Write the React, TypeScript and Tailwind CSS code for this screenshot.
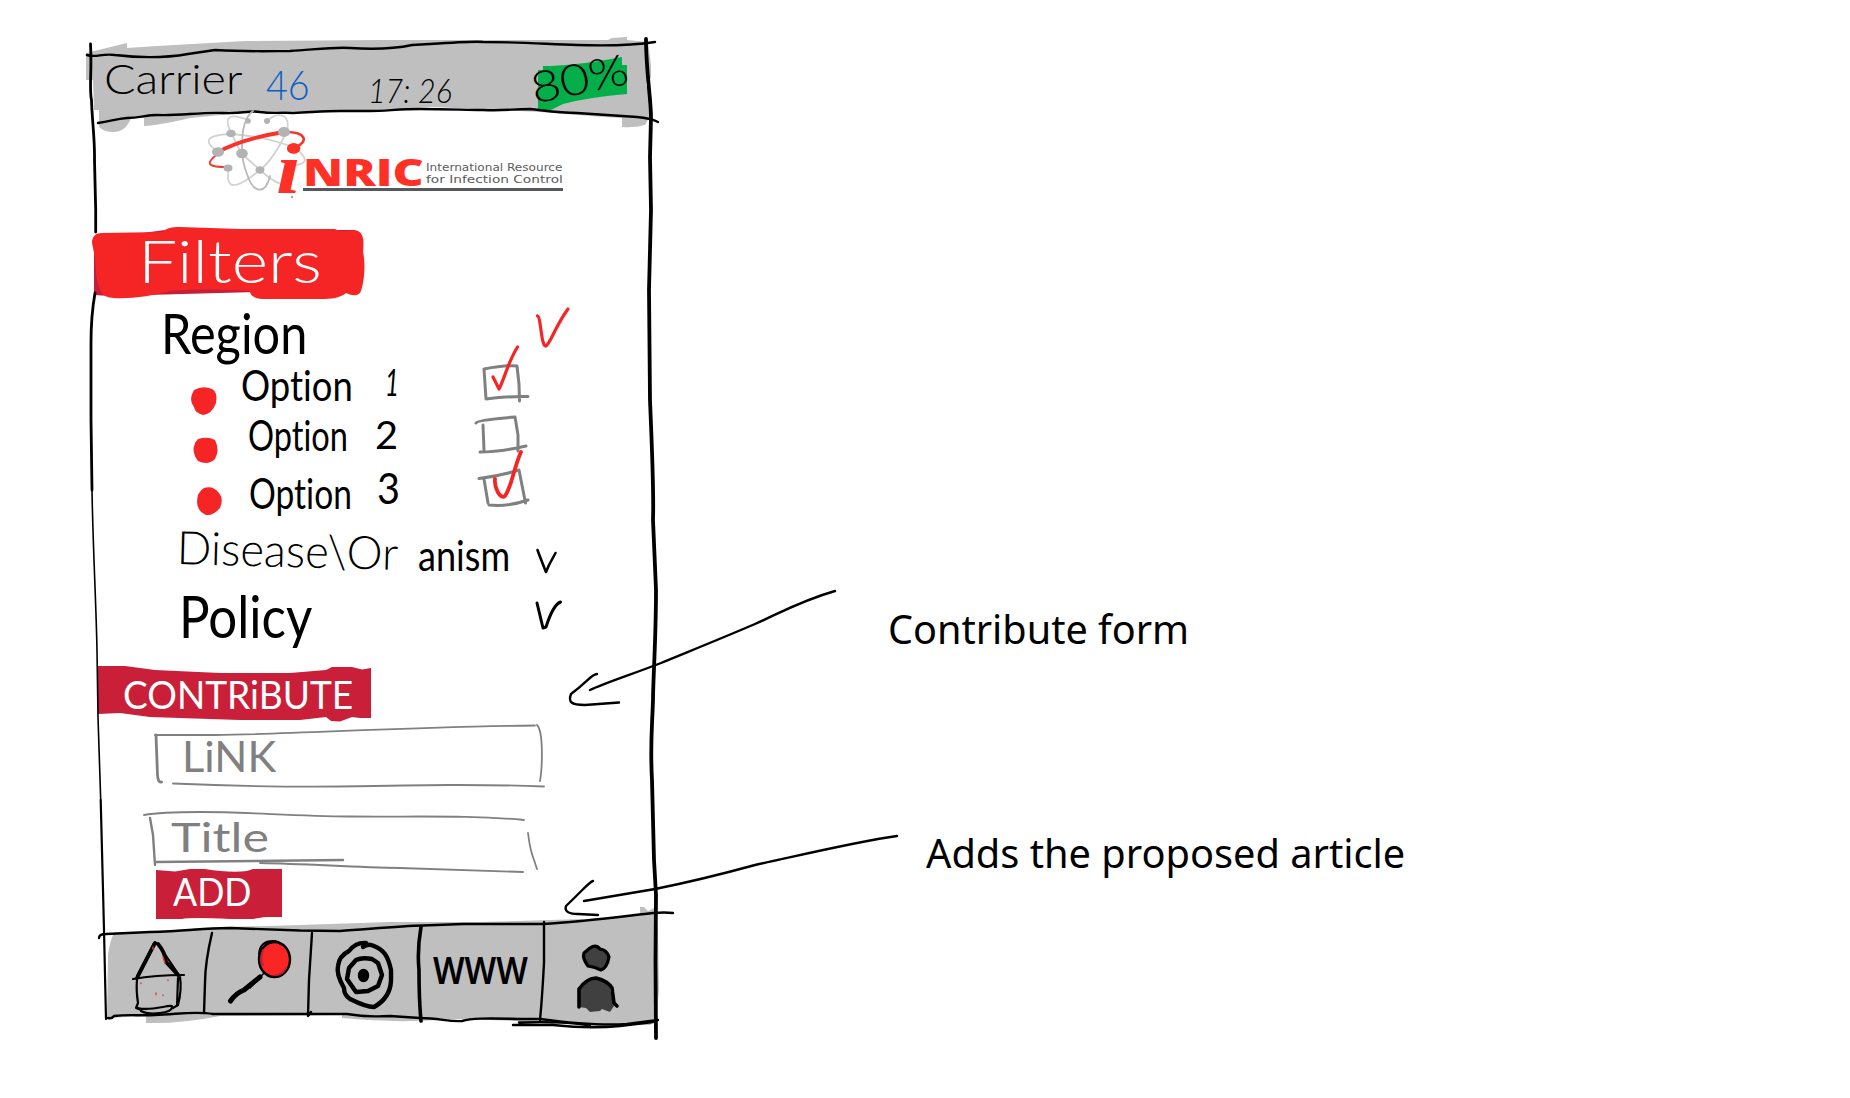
import { useLayoutEffect, useRef, useState, type ReactNode } from "react";

/** Hand lettering stretched horizontally so that it fills `w` pixels. */
function Ink({ w, className = "", children }: { w: number; className?: string; children: ReactNode }) {
  const ref = useRef<HTMLSpanElement>(null);
  const [scale, setScale] = useState(1);
  useLayoutEffect(() => {
    if (ref.current) setScale(w / ref.current.offsetWidth);
  }, [w]);
  return (
    <span className={"relative block shrink-0 leading-none " + className} style={{ width: w }}>
      <span
        ref={ref}
        className="inline-block origin-left whitespace-nowrap leading-none"
        style={{ transform: `scaleX(${scale})` }}
      >
        {children}
      </span>
    </span>
  );
}

/** Pen strokes drawn behind or over a section; the view box uses board coordinates. */
function Strokes({ box, children }: { box: string; children: ReactNode }) {
  return (
    <svg
      viewBox={box}
      className="pointer-events-none absolute inset-0 h-full w-full overflow-visible"
      fill="none"
      stroke="#000"
      strokeWidth="2.4"
      strokeLinecap="round"
      strokeLinejoin="round"
      aria-hidden="true"
    >
      {children}
    </svg>
  );
}

function StatusBar() {
  return (
    <header className="relative flex h-[70px] items-start">
      <Strokes box="90 40 567 70">
        <path
          stroke="none"
          fill="#bfbfbf"
          d="M86 53 127 43V48L157 46 245 41 380 40H608L612 38 627 37V40L648 42 651 65 651 78Q645 82 646 86L650 87 652 105 649 118 645 125Q634 128 622 127V118L603 117 540 112 432 107 380 110 252 112 190 118Q160 125 144 126V118H131Q126 132 113 132 104 132 99 127V110H94L93 80H86Z"
        />
        <path
          stroke="none"
          fill="#04ae49"
          d="M538 70H543V66H551Q587 64 622 57V65H627V94Q590 97 563 104L551 110H538Z"
        />
        <path d="M87 55C96 58 102 53 115 55 140 58 165 58 188 54L215 50C250 52 275 51 290 51 320 49 335 47 350 48 380 50 398 48 412 45L430 44C460 42 475 41 483 42 520 42 545 44 577 45 610 46 636 45 655 42" />
        <path d="M98 123C112 121 115 119 127 118 140 118 146 115 157 115 180 116 200 112 223 113 245 114 250 110 260 112 275 114 285 112 293 113 315 112 325 111 340 111L370 111C385 111 400 109 420 109 450 109 465 110 483 110 505 111 512 109 530 109 548 111 560 113 577 113L637 117Q650 118 658 122" />
      </Strokes>
      <Ink w={139} className="mt-[17px] ml-[14px] text-[42px] font-light">Carrier</Ink>
      <Ink w={44} className="mt-[23px] ml-[23px] text-[42px] font-light text-[#0b5fc4]">46</Ink>
      <Ink w={84} className="mt-[33px] ml-[58px] text-[34px] font-light italic">17: 26</Ink>
      <Ink w={98} className="mt-[16px] ml-[78px] -rotate-[12deg] text-[43px] font-light">80%</Ink>
    </header>
  );
}

function Logo() {
  return (
    <div className="relative flex h-[100px] items-start">
      <Strokes box="90 110 567 100">
        <g stroke="#d2d2d2" strokeWidth="1.8">
          <path d="M231 133C224 118 227 112 248 120M231 133C236 141 238 148 242 154L260 170Q272 181 281 184" />
          <path d="M267 121C276 112 291 112 287 131 278 150 269 163 260 170 246 181 238 186 232 185 226 182 229 175 228 168" />
          <path d="M218 152C204 142 204 135 231 134 260 136 280 142 295 148 308 158 308 163 296 165" />
          <path stroke="#b9b9b9" d="M253 111C239 121 240 158 247 174 253 193 265 196 270 176" />
        </g>
        <path stroke="#fa332a" strokeWidth="4" d="M218 152C238 141 265 135 284 132" />
        <path stroke="#fa332a" strokeWidth="2.6" d="M286 132C307 132 308 142 296 147" />
        <path stroke="#e5443d" strokeWidth="2" d="M215 156C204 165 212 167 225 167" />
        <g stroke="none" fill="#b3b3b3">
          <circle cx="248" cy="121" r="2.8" />
          <circle cx="267" cy="121" r="3" />
          <ellipse cx="231" cy="133.500" rx="4.800" ry="3.800" />
          <ellipse cx="284" cy="132" rx="6" ry="5" />
          <ellipse cx="218" cy="152" rx="6" ry="4.800" />
          <ellipse cx="242" cy="153.500" rx="5.800" ry="4.800" />
          <ellipse cx="228" cy="168" rx="4.500" ry="3.500" />
          <ellipse cx="260" cy="170" rx="4.500" ry="3.800" />
        </g>
        <circle cx="292" cy="197" r="0.800" stroke="none" fill="#222" />
        <path stroke="#55585c" strokeWidth="3" strokeLinecap="butt" d="M303 189.500H563" />
      </Strokes>
      <Ink w={25} className="mt-[24px] ml-[186px] font-['Liberation_Serif',serif] text-[71px] font-bold text-[#ff3026] italic">i</Ink>
      <Ink w={121} className="mt-[43px] ml-[2px] font-['Open_Sans',sans-serif] text-[37px] font-extrabold text-[#ff3026]">NRIC</Ink>
      <div className="mt-[52px] ml-[2px] flex flex-col font-['DejaVu_Sans',sans-serif] text-[10.500px] text-[#5c5c5c]">
        <Ink w={137}>International Resource</Ink>
        <Ink w={137} className="mt-px">for Infection Control</Ink>
      </div>
    </div>
  );
}

function Filters() {
  return (
    <>
      <h2 className="relative flex h-[95px] items-start">
        <Strokes box="90 210 567 95">
          <path stroke="none" fill="#c41e3a" d="M94 250 94 295 110 296 260 292 253 288 110 290ZM120 236 165 230V236ZM330 230H354V234H330Z" />
          <path
            stroke="none"
            fill="#f52525"
            d="M92 243C92 236 96 233 102 233L163 232C166 228 172 227 180 227L240 229 335 229Q340 232 345 231L355 230C364 232 364 240 363 252 366 265 364 285 360 293 356 297 350 295 346 293 340 298 332 299 320 299L262 299C252 298 250 294 250 291 220 289 190 289 170 291 150 297 115 301 105 296 99 292 96 280 95 258Z"
          />
        </Strokes>
        <Ink w={184} className="mt-[21px] ml-[48px] text-[59px] font-light text-white">Filters</Ink>
      </h2>
      <section className="flex h-[355px] flex-col">
        <div className="relative flex h-[55px] items-start">
          <Strokes box="90 305 567 55">
            <path stroke="#f52525" strokeWidth="3.200" d="M537.500 316C541 317 541 347 546 346 550 344 556 325 568 309" />
          </Strokes>
          <Ink w={146} className="-mt-[1px] ml-[71px] text-[57px]">Region</Ink>
        </div>
        <div className="relative flex h-[50px] items-start">
          <Strokes box="90 360 567 50">
            <path stroke="none" fill="#f52525" d="M194 390Q203 385 212 389 218 392 216 403 212 414 203 415 195 413 194 407 188 400 194 390Z" />
            <g stroke="#808080" strokeWidth="3">
              <path d="M484 369Q505 365 517 366L519 384 519.500 401M484 369 486 399Q510 396 528 396.500" />
            </g>
            <path stroke="#f52525" strokeWidth="3.200" d="M493 377 499 389C504 380 508 362 517.500 347" />
          </Strokes>
          <Ink w={112} className="mt-[4px] ml-[151px] text-[42px]">Option</Ink>
          <Ink w={14} className="mt-[4px] ml-[32px] text-[36px] italic">1</Ink>
        </div>
        <div className="relative flex h-[50px] items-start">
          <Strokes box="90 410 567 50">
            <path stroke="none" fill="#f52525" d="M198 439Q208 436 215 440 220 450 215 459 208 466 198 461 191 452 195 443Z" />
            <path stroke="#808080" strokeWidth="3" d="M476 423Q477 420 515 417L518 435V451M483 425 484 450M480 452Q500 452 526 446" />
          </Strokes>
          <Ink w={100} className="mt-[4px] ml-[158px] text-[42px]">Option</Ink>
          <Ink w={23} className="mt-[5px] ml-[27px] text-[38px]">2</Ink>
        </div>
        <div className="relative flex h-[50px] items-start">
          <Strokes box="90 460 567 50">
            <path stroke="none" fill="#f52525" d="M204 488Q213 485 219 493 224 499 220 508 213 516 206 515 197 511 197 502 197 492 204 488Z" />
            <path stroke="#808080" strokeWidth="3" d="M479 478.500Q500 476 519 470L525.500 503M484 479 488 503M489 505Q508 507 528 500" />
            <path stroke="#f52525" strokeWidth="3.800" d="M495 479C494 487 500 500 505 496 512 486 513 470 521 452" />
          </Strokes>
          <Ink w={103} className="mt-[12px] ml-[159px] text-[42px]">Option</Ink>
          <Ink w={23} className="mt-[6px] ml-[25px] text-[43px]">3</Ink>
        </div>
        <div className="relative flex h-[65px] items-start">
          <Strokes box="90 510 567 65">
            <path strokeWidth="2.600" d="M537.500 550Q540 557 546 572L549 565 555.500 553" />
          </Strokes>
          <Ink w={221} className="mt-[17px] ml-[87px] rotate-[1.5deg] text-[46px] font-light">Disease\Or</Ink>
          <Ink w={92} className="mt-[24px] ml-[20px] text-[42px]">anism</Ink>
        </div>
        <div className="relative flex h-[80px] items-start">
          <Strokes box="90 575 567 80">
            <path strokeWidth="3" d="M537 603 543 628 546 627Q553 605 560.500 602" />
          </Strokes>
          <Ink w={133} className="mt-[12px] ml-[89px] text-[58px]">Policy</Ink>
        </div>
      </section>
    </>
  );
}

function Contribute() {
  return (
    <>
      <h2 className="relative flex h-[65px] items-start">
        <Strokes box="90 660 567 65">
          <path
            stroke="none"
            fill="#c91f38"
            d="M98 666 125 666 155 670 220 673H290L326 670 332 667 352 667 362 669.500 371 668V718H360L352 717 340 721.500 331 721 326 717 300 720 240 720 150 717 120 713 98 714Z"
          />
        </Strokes>
        <Ink w={230} className="mt-[15px] ml-[33px] text-[39px] text-white">CONTRiBUTE</Ink>
      </h2>
      <div className="relative flex h-[75px] items-start">
        <Strokes box="90 725 567 75">
          <g stroke="#808080" strokeWidth="1.800">
            <path d="M155 735H215C300 734 400 727 535 725.500M173 783.500C230 786 280 787 340 786.500 420 785 480 784 544 786.500M537 725C544 732 542 770 540 781" />
            <path strokeWidth="2.800" d="M156 735 157.500 775Q158 783 161.500 782" />
          </g>
        </Strokes>
        <Ink w={94} className="mt-[10px] ml-[92px] text-[42px] text-[#808080]">LiNK</Ink>
      </div>
      <div className="relative flex h-[68px] items-start">
        <Strokes box="90 800 567 68">
          <g stroke="#808080" strokeWidth="1.800">
            <path d="M144 815C160 812 180 812 200 812 250 812 290 816 350 816.500 420 817 470 815 524 820M260 863C310 864 350 867 400 868L523 872M528 833Q530 850 534 860L537 869" />
            <path strokeWidth="2.400" d="M150 818 153 835 155 865M155 862 343 860" />
          </g>
        </Strokes>
        <Ink w={98} className="mt-[16px] ml-[81px] text-[41px] text-[#808080]">Title</Ink>
      </div>
      <div className="relative flex h-[57px] items-start">
        <Strokes box="90 868 567 57">
          <path
            stroke="none"
            fill="#c91f38"
            d="M156 870 175 871.500 190 869 205 869Q230 873 247 871L253 869H282V917H265L253 919 230 919Q190 917 182 919L156 919Z"
          />
        </Strokes>
        <Ink w={79} className="mt-[4px] ml-[83px] text-[38px] text-white">ADD</Ink>
      </div>
    </>
  );
}

function NavBar() {
  return (
    <nav className="relative flex h-[115px] items-start">
      <Strokes box="90 925 567 115">
        <path
          stroke="none"
          fill="#bfbfbf"
          d="M107 1018 108 955Q110 940 114 933L160 931 220 927 268 926 300 925 390 922 480 922 583 919V922L640 914V907L644 907 648 911 656 907V915L658 930 659 990 656 1020 650 1025H600L540 1022 462 1019 440 1020Q390 1023 342 1018V1015L220 1016Q180 1024 146 1023V1016L108 1018Z"
        />
        <path d="M99 938Q99 934 106 934L150 932C190 931 200 928 230 928L300 930.500 340 931C370 929 400 926 423 925.500L463 924 543 924C580 922 610 918 653 913Q665 912 673 913" />
        <path d="M108 1018Q112 1019 114 1016C130 1014 140 1016 155 1015 180 1014 195 1011 213 1014L280 1014 347 1014C370 1018 380 1016 390 1016L420 1018C440 1018 448 1022 462 1021 475 1017 500 1019 540 1019 570 1023 600 1026 627 1024L658 1020" />
        <path d="M513 1025H553Q590 1029 620 1026L653 1022M519 1022.500Q560 1021 590 1025" />
        <path d="M212 933C208 950 205 970 205 983L204 1013M312 933 309 980 308 1016 311 1012M544 922V963Q542 1000 540 1020" />
        <path strokeWidth="3.600" d="M421 927Q417 950 419 970 419 1000 421 1021" />
      </Strokes>
      <button aria-label="Home" className="relative h-[90px] w-[117px]">
        <Strokes box="90 925 117 90">
          <path strokeWidth="3.800" d="M155 943 137 978M158 944Q165 952 166 962L178 975" />
          <path strokeWidth="2.200" d="M137 976 154 943 158 944 179 975M133 979Q155 975 184 975M137 980Q136 990 138 1003L136 1008 141 1010M180 977Q182 990 178 1005L173 1008M178 978 177 1006M138 1008C150 1012 174 1003 172 1007 172 1013 150 1016 141 1011" />
          <path stroke="#e33" strokeWidth="1.400" d="M153 947V949M163 957 165 963M168 980V980.500M156 993V994.500M163 995V995.500M141 983V983.500" />
        </Strokes>
      </button>
      <button aria-label="Search" className="relative h-[90px] w-[105px]">
        <Strokes box="207 925 105 90">
          <path strokeWidth="5" d="M260 977 244 990Q236 993 230.500 1001" />
          <path strokeWidth="1.600" d="M265 972 250 988" />
          <ellipse cx="274.500" cy="959.500" rx="15.500" ry="17.500" fill="#fb2524" strokeWidth="2.400" />
          <path stroke="#c41e3a" strokeWidth="2" d="M263 950Q260 958 263 965M286 968Q282 975 276 975" />
          <path strokeWidth="2" d="M259 954Q260 941 273 941 279 941 280 944" />
        </Strokes>
      </button>
      <button aria-label="Target" className="relative h-[90px] w-[108px]">
        <Strokes box="312 925 108 90">
          <path strokeWidth="4.400" d="M363 947Q368 943 374 946C384 950 388 956 391 970L391 981Q390 998 374 1007 366 1007 350 999 344 995 344 988 336 974 338 966 339 956 349 951 356 942 366 943" />
          <path strokeWidth="4.400" d="M356 960Q362 957 372 959L378 963 382 975 378 986 368 991 356 992 347 979 349 968Z" />
          <ellipse cx="363.500" cy="975.500" rx="4.500" ry="5.500" fill="#000" />
        </Strokes>
      </button>
      <Ink w={95} className="mt-[26px] ml-[13px] font-['Noto_Sans',sans-serif] text-[37px] font-semibold">WWW</Ink>
      <button aria-label="Profile" className="relative ml-[18px] h-[90px] w-[110px]">
        <Strokes box="546 925 110 90">
          <path fill="#404040" strokeWidth="3.200" d="M590 948Q596 944 600 949 607 950 609 957 607 968 601 970 595 967 588 966 582 958 584 953Z" />
          <path stroke="none" fill="#404040" d="M579 1007V989L587 980 596 978 609 984 614 1006 610 1012 602 1009 600 1011 590 1012 586 1008Z" />
          <path strokeWidth="3.600" d="M579 1007V989Q587 978 596 978 608 981 612 988L614 1003 617 1006" />
        </Strokes>
      </button>
    </nav>
  );
}

export default function App() {
  return (
    <main className="relative flex h-[1098px] w-[1850px] items-start overflow-hidden bg-white pt-[40px] pl-[90px] font-['Lato',sans-serif] text-black [font-variant-ligatures:none]">
      <div className="flex w-[567px] shrink-0 flex-col">
        <StatusBar />
        <Logo />
        <Filters />
        <Contribute />
        <NavBar />
      </div>
      <aside className="flex flex-col pt-[569px] font-['Noto_Sans',sans-serif] text-[40px]">
        <Ink w={301} className="ml-[231px]">Contribute form</Ink>
        <Ink w={479} className="mt-[184px] ml-[269px]">Adds the proposed article</Ink>
      </aside>
      <Strokes box="0 0 1850 1098">
        <path strokeWidth="2.800" d="M90.500 44C92 70 89 90 91.500 100 92 120 95 140 94.500 160L95.700 210V232M95 293C92 310 91 330 91 343L91 420 92 490" />
        <path strokeWidth="1.600" d="M92 490C93 550 96 600 97 650L98 717 100.700 800" />
        <path strokeWidth="2.200" d="M100.700 800 103 890 104 930 106 1019" />
        <path strokeWidth="3.800" d="M646 39C646 70 651 100 651 117L650 157 651 210 649 290 650 400C652 450 654 490 653 520L656 590C656 640 653 680 653 700 652 730 650 745 652 780L654 860 656 895 655.500 960 656 1038" />
        <path d="M835 591C800 601 780 613 755 624 720 639 690 651 661 663 630 675 605 683 590 690" />
        <path d="M597 674C592 674 588 681 571 694 568 702 571 705 585 705L619 702.500" />
        <path d="M897 836C860 841 810 853 755 865 715 876 690 882 655 889L584 901" />
        <path d="M593 881C589 882 585 888 566 906 564 912 570 914 578 914L598 915" />
      </Strokes>
    </main>
  );
}
